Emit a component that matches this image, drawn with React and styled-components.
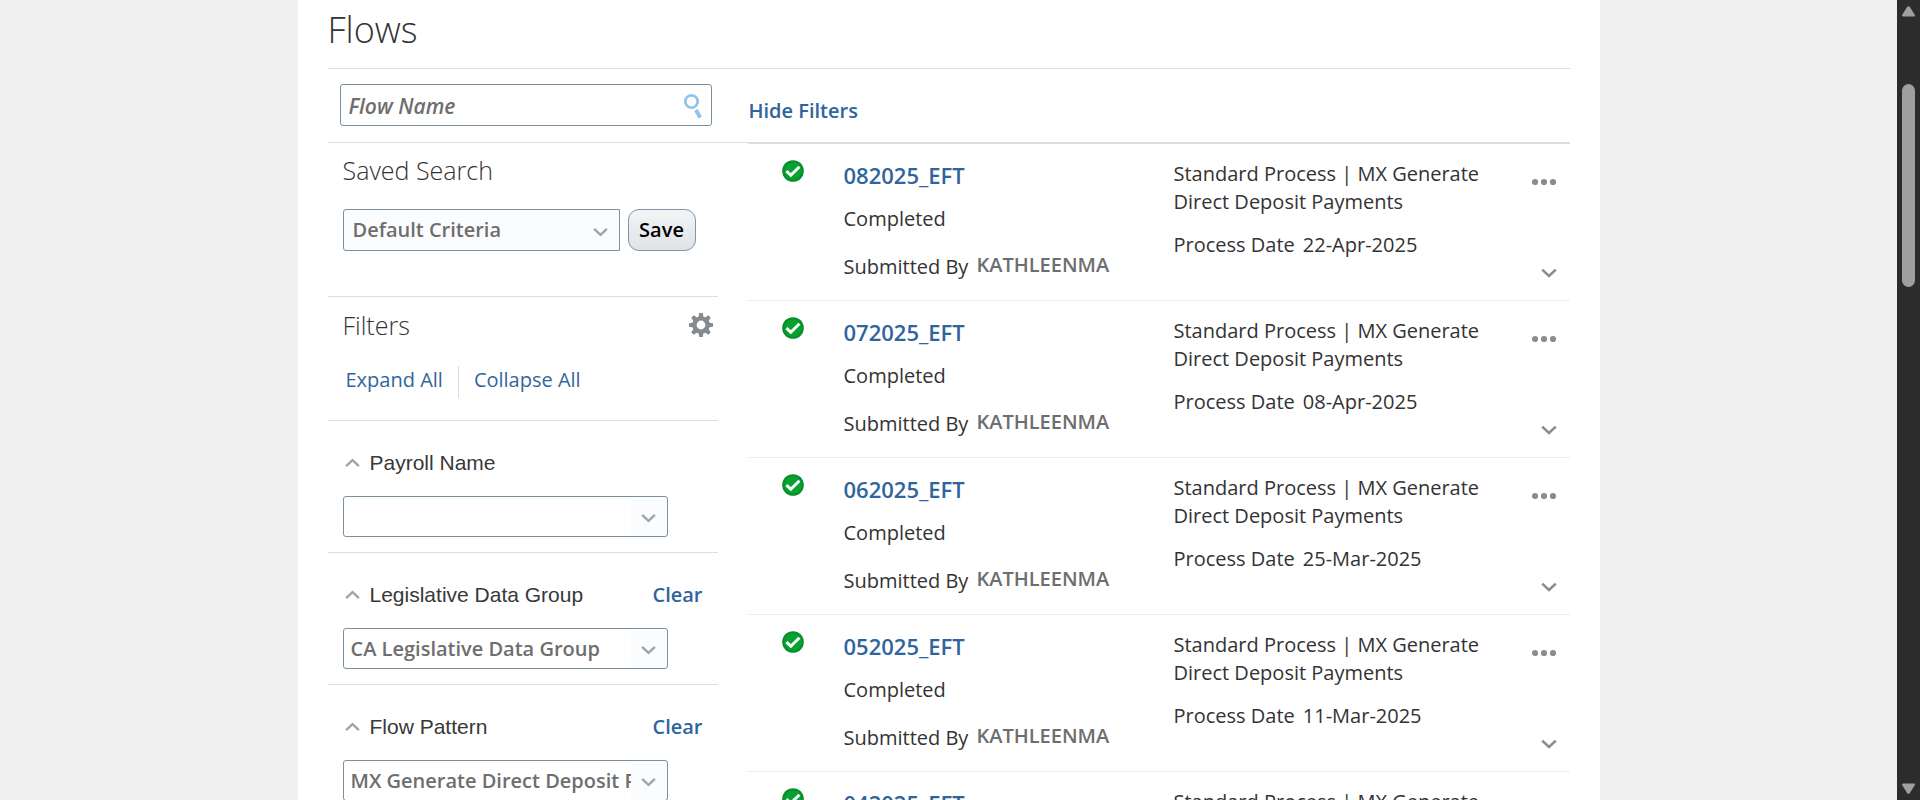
import React from 'react';
import styled, { createGlobalStyle } from 'styled-components';

const GlobalStyle = createGlobalStyle`
  * { box-sizing: border-box; }
  body {
    margin: 0;
    background: #f0f0f0;
    color: #333;
    font-family: "Open Sans", "Noto Sans", sans-serif;
    font-size: 20px;
    line-height: 28px;
  }
`;

const Viewport = styled.div`
  display: flex;
  height: 100vh;
  overflow: hidden;
`;

const Backdrop = styled.div`
  flex: 1;
  min-width: 0;
  padding: 0 16px;
`;

const Page = styled.main`
  max-width: 1302px;
  min-height: 100%;
  margin: 0 auto;
  padding: 0 30px;
  background: #fff;
`;

const PageTitle = styled.h1`
  margin: 0;
  padding: 6px 0 14px;
  border-bottom: 1px solid #d6dfe6;
  font-size: 36px;
  line-height: 48px;
  font-weight: 300;
`;

const Columns = styled.div`
  display: flex;
  align-items: flex-start;
`;

const Sidebar = styled.aside`
  width: 420px;
  flex: none;
`;

const SearchBar = styled.div`
  height: 74px;
  padding: 15px 36px 0 12px;
  border-bottom: 1px solid #d6dfe6;
`;

const SearchBox = styled.label`
  display: flex;
  align-items: center;
  height: 42px;
  padding: 2px 8px 0 8px;
  border: 1px solid #7b909d;
  border-radius: 3px;
`;

const SearchInput = styled.input`
  flex: 1;
  min-width: 0;
  padding: 0;
  border: 0;
  outline: 0;
  background: none;
  color: #6e6e6e;
  font: italic 600 21px/28px "Open Sans", sans-serif;
  &::placeholder { color: #6e6e6e; opacity: 1; }
`;

const Section = styled.section`
  width: 390px;
  padding: ${(p) => p.$pad};
  border-bottom: 1px solid #dcdfe1;
`;

const SectionHead = styled.div`
  display: flex;
  align-items: center;
  justify-content: space-between;
`;

const SectionTitle = styled.h2`
  margin: 0;
  font-size: 25px;
  line-height: 34px;
  font-weight: 300;
`;

const SaveRow = styled.div`
  display: flex;
  gap: 8px;
  margin-top: 22px;
`;

const IconButton = styled.button`
  display: flex;
  align-items: center;
  justify-content: center;
  padding: 0;
  border: 0;
  background: none;
  cursor: pointer;
`;

const SaveButton = styled.button`
  width: 68px;
  height: 42px;
  padding: 0;
  border: 1px solid #7e95ab;
  border-radius: 11px;
  background: linear-gradient(#f3f5f6, #dfe3e7);
  color: #000;
  font: 600 20px/28px "Open Sans", sans-serif;
`;

const SelectBox = styled.div`
  position: relative;
  width: ${(p) => p.$width};
`;

const Select = styled.select`
  display: block;
  width: 100%;
  height: ${(p) => (p.$filled ? '42px' : '41px')};
  padding: 0 36px 0 ${(p) => (p.$filled ? '9px' : '7px')};
  appearance: none;
  border: 1px solid #7b909d;
  border-radius: ${(p) => (p.$filled ? '3px 0 0 3px' : '3px')};
  background: ${(p) =>
    p.$filled ? '#fbfcfe' : 'linear-gradient(#fbfcfe, #fbfcfe) right / 36px 100% no-repeat #fff'};
  color: #6e6e6e;
  font: 600 20px/28px "Open Sans", sans-serif;
`;

const SelectArrow = styled.span`
  position: absolute;
  top: 3px;
  bottom: 0;
  right: 12px;
  display: flex;
  align-items: center;
  pointer-events: none;
`;

const Actions = styled.div`
  display: flex;
  margin-top: 24px;
  padding-left: 3px;
`;

const ActionLink = styled.a`
  padding: 0 15px 4px 0;
  color: #32659b;
  text-decoration: none;
  & + & {
    padding-left: 15px;
    border-left: 1px solid #d6dfe6;
  }
`;

const StrongLink = styled.a`
  color: #2f649c;
  font-weight: 600;
  text-decoration: none;
`;

const FlowLink = styled(StrongLink)`
  font-size: 22px;
  line-height: 30px;
`;

const GroupHead = styled.div`
  display: flex;
  align-items: center;
  margin-bottom: 19px;
  padding-left: 2px;
`;

const GroupLabel = styled.label`
  flex: 1;
  margin-left: 10px;
  color: #383838;
  font-family: "Liberation Sans", Arial, sans-serif;
  font-size: 21px;
`;

const Results = styled.section`
  flex: 1;
  min-width: 0;
`;

const ResultsBar = styled.div`
  height: 75px;
  padding-top: 28px;
  padding-left: 1px;
  border-bottom: 2px solid #d6dfe6;
`;

const FlowList = styled.ul`
  margin: 0;
  padding: 0;
  list-style: none;
`;

const FlowRow = styled.li`
  display: grid;
  grid-template-columns: 32px 300px minmax(0, 310px) minmax(26px, 1fr);
  column-gap: 30px;
  height: 157px;
  padding: 16px 12px 0 34px;
  border-bottom: 1px solid #ebedee;
`;

const Stack = styled.div`
  display: flex;
  flex-direction: column;
  gap: 15px;
`;

const Line = styled.div`
  display: flex;
  gap: 8px;
  white-space: nowrap;
`;

const Submitter = styled.span`
  color: #6e6e6e;
  font-weight: 600;
  line-height: 24px;
`;

const SubmitLine = styled(Line)`
  margin-top: 5px;
`;

const RowActions = styled.div`
  display: flex;
  flex-direction: column;
  align-items: flex-end;
  justify-content: space-between;
  padding: 16px 0 21px;
`;

const Scrollbar = styled.div`
  display: flex;
  flex-direction: column;
  align-items: center;
  width: 23px;
  flex: none;
  padding: 6px 0;
  background: #2c2c2c;
`;

const ScrollTrack = styled.div`
  flex: 1;
  padding-top: 67px;
`;

const ScrollThumb = styled.div`
  width: 13px;
  height: 203px;
  border-radius: 7px;
  background: #9f9f9f;
`;

const Chevron = ({ up, size = 15, color = '#a2a4a6' }) => (
  <svg width={size} height="12" viewBox="0 0 16 12" fill="none" stroke={color} strokeWidth="2.6" aria-hidden="true">
    <path d={up ? 'M1.2 9.4 8 3l6.8 6.4' : 'M1.2 2.6 8 9l6.8-6.4'} />
  </svg>
);

const SearchIcon = () => (
  <svg width="20" height="26" viewBox="0 0 20 26" fill="none" stroke="#92c4eb" aria-hidden="true">
    <circle cx="8.5" cy="8.5" r="6.2" strokeWidth="2.8" />
    <path d="M13 17 17.2 24.6" strokeWidth="4" />
  </svg>
);

const GearIcon = () => (
  <svg width="24" height="24" viewBox="-12 -12 24 24" aria-hidden="true">
    <g fill="#858a8e">
      {[0, 45, 90, 135, 180, 225, 270, 315].map((a) => (
        <path key={a} transform={`rotate(${a})`} d="M-1.8-12h3.6l.8 5h-5.2z" />
      ))}
    </g>
    <circle r="6.6" fill="none" stroke="#858a8e" strokeWidth="4.4" />
  </svg>
);

const CheckIcon = () => (
  <svg width="22" height="22" viewBox="0 0 22 22" role="img" aria-label="Completed">
    <circle cx="11" cy="11" r="10.8" fill="#088c2c" />
    <circle cx="11" cy="11" r="8.8" fill="#06a22f" />
    <path d="m4.4 11.2 4.4 4 8.6-8.4" fill="none" stroke="#fff" strokeWidth="3" />
  </svg>
);

const DotsIcon = () => (
  <svg width="26" height="12" viewBox="0 0 26 12" fill="#898d91" aria-hidden="true">
    <circle cx="3" cy="6" r="3.1" />
    <circle cx="12" cy="6" r="3.1" />
    <circle cx="21" cy="6" r="3.1" />
  </svg>
);

const ScrollArrow = ({ down }) => (
  <svg width="15" height="11" viewBox="0 0 15 11" aria-hidden="true">
    <path
      d={down ? 'M2 1.5h11L8.2 9.3q-.7.9-1.4 0z' : 'M2 9.5h11L8.2 1.7q-.7-.9-1.4 0z'}
      fill="#9f9f9f"
      stroke="#9f9f9f"
      strokeWidth="2"
      strokeLinejoin="round"
    />
  </svg>
);

const groups = [
  { id: 'payroll', label: 'Payroll Name', value: '' },
  { id: 'ldg', label: 'Legislative Data Group', value: 'CA Legislative Data Group', clear: true },
  { id: 'pattern', label: 'Flow Pattern', value: 'MX Generate Direct Deposit Payments', clear: true },
];

const flows = [
  { name: '082025_EFT', date: '22-Apr-2025' },
  { name: '072025_EFT', date: '08-Apr-2025' },
  { name: '062025_EFT', date: '25-Mar-2025' },
  { name: '052025_EFT', date: '11-Mar-2025' },
  { name: '042025_EFT', date: '25-Feb-2025' },
];

const FilterGroup = ({ id, label, value, clear }) => (
  <Section $pad="28px 15px 15px">
    <GroupHead>
      <IconButton type="button" aria-label={`Collapse ${label}`}>
        <Chevron up />
      </IconButton>
      <GroupLabel htmlFor={id}>{label}</GroupLabel>
      {clear && <StrongLink href="#clear">Clear</StrongLink>}
    </GroupHead>
    <SelectBox $width="325px">
      <Select id={id} defaultValue={value}>
        <option>{value}</option>
      </Select>
      <SelectArrow>
        <Chevron />
      </SelectArrow>
    </SelectBox>
  </Section>
);

const Flow = ({ name, date }) => (
  <FlowRow>
    <div>
      <CheckIcon />
    </div>
    <Stack>
      <FlowLink href="#flow">{name}</FlowLink>
      <span>Completed</span>
      <SubmitLine>
        <span>Submitted By</span>
        <Submitter>KATHLEENMA</Submitter>
      </SubmitLine>
    </Stack>
    <Stack>
      <span>Standard Process | MX Generate Direct Deposit Payments</span>
      <Line>
        <span>Process Date</span>
        <span>{date}</span>
      </Line>
    </Stack>
    <RowActions>
      <IconButton type="button" aria-label="Actions">
        <DotsIcon />
      </IconButton>
      <IconButton type="button" aria-label="Show details">
        <Chevron size={18} color="#898d91" />
      </IconButton>
    </RowActions>
  </FlowRow>
);

export default function App() {
  return (
    <Viewport>
      <GlobalStyle />
      <Backdrop>
        <Page>
          <PageTitle>Flows</PageTitle>
          <Columns>
            <Sidebar>
              <SearchBar>
                <SearchBox>
                  <SearchInput type="text" placeholder="Flow Name" aria-label="Flow Name" />
                  <IconButton type="button" aria-label="Search">
                    <SearchIcon />
                  </IconButton>
                </SearchBox>
              </SearchBar>
              <Section $pad="10px 15px 45px">
                <SectionTitle>Saved Search</SectionTitle>
                <SaveRow>
                  <SelectBox $width="277px">
                    <Select $filled aria-label="Saved Search">
                      <option>Default Criteria</option>
                    </Select>
                    <SelectArrow>
                      <Chevron />
                    </SelectArrow>
                  </SelectBox>
                  <SaveButton type="button">Save</SaveButton>
                </SaveRow>
              </Section>
              <Section $pad="11px 5px 22px 15px">
                <SectionHead>
                  <SectionTitle>Filters</SectionTitle>
                  <IconButton type="button" aria-label="Filter settings">
                    <GearIcon />
                  </IconButton>
                </SectionHead>
                <Actions>
                  <ActionLink href="#expand">Expand All</ActionLink>
                  <ActionLink href="#collapse">Collapse All</ActionLink>
                </Actions>
              </Section>
              {groups.map((g) => (
                <FilterGroup key={g.id} {...g} />
              ))}
            </Sidebar>
            <Results>
              <ResultsBar>
                <StrongLink href="#hide">Hide Filters</StrongLink>
              </ResultsBar>
              <FlowList>
                {flows.map((f) => (
                  <Flow key={f.name} {...f} />
                ))}
              </FlowList>
            </Results>
          </Columns>
        </Page>
      </Backdrop>
      <Scrollbar aria-hidden="true">
        <ScrollArrow />
        <ScrollTrack>
          <ScrollThumb />
        </ScrollTrack>
        <ScrollArrow down />
      </Scrollbar>
    </Viewport>
  );
}
